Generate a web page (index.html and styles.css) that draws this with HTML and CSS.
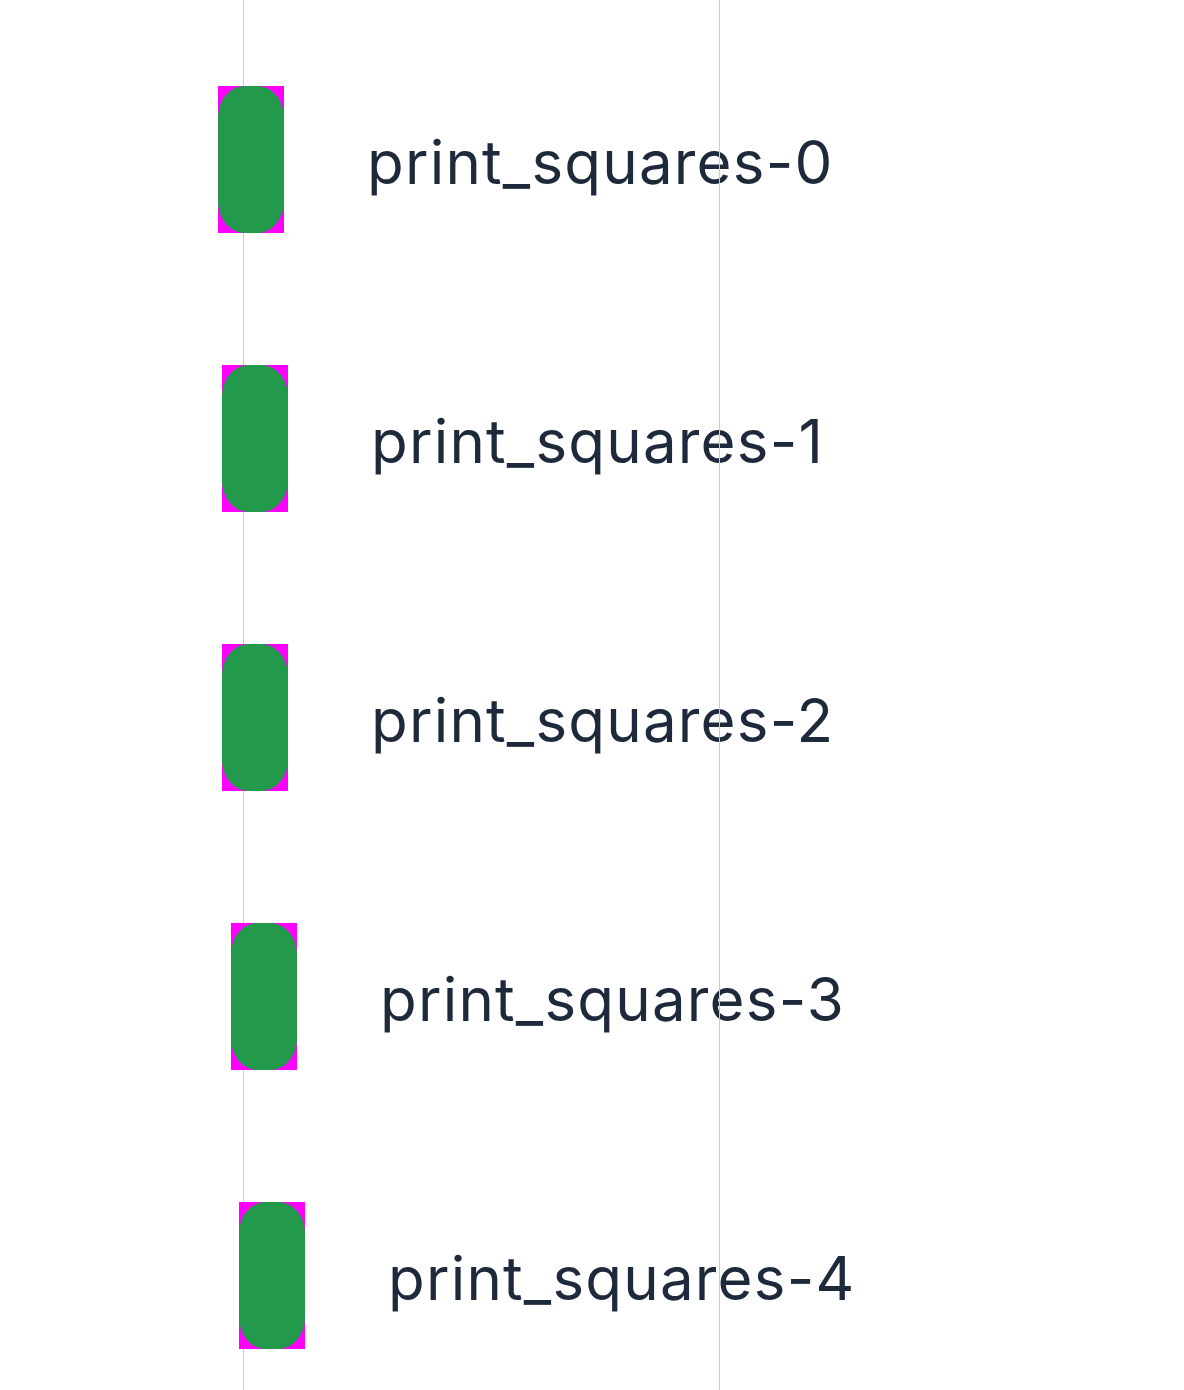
FILE: index.html
```html
<!DOCTYPE html>
<html lang="en">
<head>
<meta charset="utf-8">
<title>print_squares</title>
<link rel="stylesheet" href="styles.css">
</head>
<body>
<div class="chart">
  <div class="grid-line line-a"></div>
  <div class="grid-line line-b"></div>
  <div class="rows">
    <div class="row row-0"><div class="bar"><div class="bar-fill"></div></div><span class="label">print_squares-0</span></div>
    <div class="row row-1"><div class="bar"><div class="bar-fill"></div></div><span class="label">print_squares-1</span></div>
    <div class="row row-2"><div class="bar"><div class="bar-fill"></div></div><span class="label">print_squares-2</span></div>
    <div class="row row-3"><div class="bar"><div class="bar-fill"></div></div><span class="label">print_squares-3</span></div>
    <div class="row row-4"><div class="bar"><div class="bar-fill"></div></div><span class="label">print_squares-4</span></div>
  </div>
</div>
</body>
</html>
```

FILE: styles.css
```css
html, body {
  margin: 0;
  padding: 0;
  background: #ffffff;
}

.chart {
  position: relative;
  width: 1184px;
  height: 1390px;
  overflow: hidden;
  font-family: Inter, "Noto Sans", sans-serif;
}

.grid-line {
  position: absolute;
  top: 0;
  bottom: 0;
  width: 1px;
  background: #c2cddc;
}

.line-a {
  left: 243px;
  z-index: 0;
}

.line-b {
  left: 719px;
  z-index: 3;
}

.rows {
  position: relative;
  z-index: 1;
  display: flex;
  flex-direction: column;
  gap: 132px;
  padding-top: 86px;
}

.row {
  display: flex;
  align-items: center;
  height: 147px;
}

.row-0 { padding-left: 218px; }
.row-1 { padding-left: 222px; }
.row-2 { padding-left: 222px; }
.row-3 { padding-left: 231px; }
.row-4 { padding-left: 239px; }

.bar {
  flex: none;
  width: 66px;
  height: 147px;
  background: #ff00ff;
}

.bar-fill {
  width: 100%;
  height: 100%;
  background: #23994b;
  border-radius: 27px / 31px;
}

.label {
  margin-left: 83px;
  margin-top: 5px;
  font-size: 60px;
  line-height: 1;
  color: #1e293b;
  letter-spacing: 1.2px;
  white-space: nowrap;
}
```
